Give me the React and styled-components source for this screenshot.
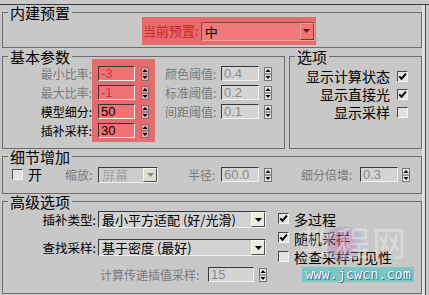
import React from 'react';
import styled, { createGlobalStyle } from 'styled-components';

const GlobalStyle = createGlobalStyle`
  html, body { margin: 0; padding: 0; background: #c8c8c8; }
  body { font-family: "Noto Sans CJK SC", "Noto Sans", sans-serif; }
`;

const Window = styled.div`
  position: relative;
  width: 429px;
  height: 295px;
  overflow: hidden;
  background: #c8c8c8;
  display: flex;
  flex-direction: column;
  color: #000;
`;

const TopStrip = styled.div`
  flex: none;
  height: 4px;
  border-bottom: 1px solid #3a3a3a;
`;

const Body = styled.div`
  display: flex;
  flex: 1;
  min-height: 0;
`;

const Content = styled.div`
  width: 420px;
  padding-left: 2px;
  display: flex;
  flex-direction: column;
`;

const Gutter = styled.div`
  flex: 1;
  background: linear-gradient(to right, #e2e2e2 0 3px, #4a4a4a 3px 4px, #c8c8c8 4px);
`;

const Group = styled.fieldset`
  box-sizing: border-box;
  margin: ${p => p.$mt || 0}px 0 0 ${p => p.$ml || 0}px;
  padding: 0;
  min-width: 0;
  height: ${p => p.$h}px;
  width: ${p => (p.$w ? `${p.$w}px` : 'auto')};
  border: 1px solid #6c6c6c;
  display: flex;
  flex-direction: ${p => p.$dir || 'column'};
  align-items: flex-start;
`;

const Legend = styled.legend`
  margin-left: 5px;
  padding: 0 2px;
  font-size: 15px;
  line-height: 15px;
`;

const GroupRow = styled.div`
  display: flex;
  margin-top: ${p => p.$mt || 0}px;
`;

const Label = styled.span`
  flex: none;
  box-sizing: border-box;
  width: ${p => (p.$w ? `${p.$w}px` : 'auto')};
  margin-left: ${p => p.$ml || 0}px;
  padding: 0 ${p => p.$pr || 0}px 0 ${p => p.$pl || 0}px;
  font-size: ${p => p.$fs || 12}px;
  line-height: ${p => p.$lh || 19}px;
  height: ${p => p.$lh || 19}px;
  text-align: ${p => p.$align || 'left'};
  color: ${p => (p.$dim ? '#7a7a7a' : p.$color || '#000')};
  white-space: nowrap;
`;

const Field = styled.div`
  flex: none;
  box-sizing: border-box;
  width: ${p => p.$w}px;
  height: 15px;
  margin-left: ${p => p.$ml || 0}px;
  border: 1px solid;
  border-color: #383838 #f0f0f0 #f0f0f0 #383838;
  background: ${p => p.$bg || '#d4d4d4'};
  color: ${p => p.$color || (p.$dim ? '#8a8a8a' : '#000')};
  font-family: "Liberation Sans", Arial, sans-serif;
  font-size: 13px;
  line-height: 13px;
  padding-left: 2px;
`;

const Control = styled.div`
  display: flex;
  align-items: center;
  height: ${p => p.$h || 19}px;
`;

const Spinner = styled.span`
  flex: none;
  display: flex;
  margin-left: ${p => p.$ml || 5}px;
`;

const SpinIcon = ({ bg = '#e4e4e4' }) => (
  <svg width="8" height="14" viewBox="0 0 8 14">
    <rect x="0.5" y="0.5" width="7" height="13" fill={bg} stroke="#777" />
    <line x1="1" y1="7" x2="7" y2="7" stroke="#555" />
    <path d="M4 2 L6.5 5 L1.5 5 Z" fill="#000" />
    <path d="M1.5 9 L6.5 9 L4 12 Z" fill="#000" />
  </svg>
);

const Spin = ({ ml, bg }) => (
  <Spinner $ml={ml}>
    <SpinIcon bg={bg} />
  </Spinner>
);

const Select = styled.div`
  flex: none;
  box-sizing: border-box;
  width: ${p => p.$w}px;
  height: ${p => p.$h || 17}px;
  margin-left: ${p => p.$ml || 0}px;
  display: flex;
  align-items: center;
  border: 1px solid;
  border-color: ${p => p.$edge || '#3a3a3a #f0f0f0 #f0f0f0 #3a3a3a'};
  background: ${p => p.$bg || '#d2d2d2'};
  color: ${p => (p.$dim ? '#a4a4a4' : '#000')};
  font-size: 13px;
  line-height: 15px;
  padding-left: 3px;
  white-space: nowrap;
`;

const SelectBtn = styled.span`
  margin-left: auto;
  box-sizing: border-box;
  width: 14px;
  height: 100%;
  display: flex;
  align-items: center;
  justify-content: center;
  border: 1px solid;
  border-color: ${p => p.$edge || '#f8f8f0 #505050 #505050 #f8f8f0'};
  background: ${p => p.$bg || '#ecebdc'};
`;

const Arrow = ({ color = '#000' }) => (
  <svg width="7" height="4" viewBox="0 0 7 4">
    <path d="M0 0 L7 0 L3.5 4 Z" fill={color} />
  </svg>
);

const Box = styled.span`
  flex: none;
  box-sizing: border-box;
  width: 11px;
  height: 11px;
  margin-left: ${p => p.$ml || 0}px;
  display: inline-flex;
  align-items: center;
  justify-content: center;
  border: 1px solid;
  border-color: #4a4a4a #f4f4f4 #f4f4f4 #4a4a4a;
  background: #e2e2e2;
`;

const CheckBox = ({ checked, ml }) => (
  <Box $ml={ml}>
    {checked && (
      <svg width="9" height="9" viewBox="0 0 9 9">
        <path d="M1.3 4.3 L3.5 6.8 L7.9 1.6" fill="none" stroke="#000" strokeWidth="1.9" />
      </svg>
    )}
  </Box>
);

/* 内建预置 */
const PresetHighlight = styled.div`
  display: flex;
  align-items: center;
  width: 174px;
  height: 28px;
  margin: -3px 0 0 139px;
  padding-left: 1px;
  box-sizing: border-box;
  background: #e46c6c;
`;

/* 基本参数 */
const LabelCol = styled.div`
  display: flex;
  flex-direction: column;
  width: ${p => p.$w}px;
  margin-left: ${p => p.$ml || 0}px;
`;

const ParamHighlight = styled.div`
  box-sizing: border-box;
  width: 63px;
  height: 83px;
  margin-top: -5px;
  padding: 5px 0 0 6px;
  background: #e46c6c;
  display: flex;
  flex-direction: column;
`;

const OptionList = styled.div`
  align-self: stretch;
  display: flex;
  flex-direction: column;
  align-items: flex-end;
  padding: 3px 13px 0 0;
`;

const OptionRow = styled.div`
  display: flex;
  align-items: center;
  gap: 7px;
  height: 18px;
  font-size: 14px;
`;

/* 高级选项 */
const AdvLeft = styled.div`
  display: flex;
  flex-direction: column;
`;

const CheckCol = styled.div`
  display: flex;
  flex-direction: column;
  margin-left: 11px;
`;

const CheckRow = styled.div`
  display: flex;
  align-items: center;
  gap: 5px;
  height: 19px;
  font-size: 14px;
`;

/* watermark over the corner */
const Watermark = styled.div`
  position: absolute;
  left: 296px;
  top: 222px;
  width: 124px;
  height: 62px;
  pointer-events: none;
`;

const Blob = styled.div`
  position: absolute;
  left: 26px;
  top: 4px;
  width: 44px;
  height: 36px;
  border-radius: 50%;
  background: radial-gradient(circle at 45% 45%, rgba(214, 90, 150, 0.55), rgba(150, 170, 220, 0.3) 60%, rgba(200, 200, 200, 0) 75%);
`;

const BigMark = styled.div`
  position: absolute;
  left: 4px;
  top: 2px;
  font-size: 34px;
  line-height: 36px;
  letter-spacing: 2px;
  color: rgba(255, 255, 255, 0.35);
  white-space: nowrap;
`;

const Url = styled.div`
  position: absolute;
  left: 6px;
  top: 45px;
  width: 112px;
  height: 15px;
  background: #7cc6c6;
  color: #fff;
  font-family: "DejaVu Sans Mono", monospace;
  font-size: 13.5px;
  line-height: 15px;
  text-align: center;
  text-shadow: 0 0 1px #2a5a8a, 1px 1px 0 #3a6a9a;
`;

const basicLeft = [
  { label: '最小比率:', value: '-3', dim: true },
  { label: '最大比率:', value: '-1', dim: true },
  { label: '模型细分:', value: '50' },
  { label: '插补采样:', value: '30' },
];

const thresholds = [
  { label: '颜色阈值:', value: '0.4' },
  { label: '标准阈值:', value: '0.2' },
  { label: '间距阈值:', value: '0.1' },
];

const options = [
  { label: '显示计算状态', checked: true },
  { label: '显示直接光', checked: true },
  { label: '显示采样', checked: false },
];

const advChecks = [
  { label: '多过程', checked: true },
  { label: '随机采样', checked: true },
  { label: '检查采样可见性', checked: false },
];

export default function App() {
  return (
    <>
      <GlobalStyle />
      <Window>
        <TopStrip />
        <Body>
          <Content>
            <Group $h={43}>
              <Legend>内建预置</Legend>
              <PresetHighlight>
                <Label $fs={13} $color="#d42424" $lh={28}>当前预置:</Label>
                <Select $w={114} $h={19} $ml={2} $bg="#f07a7a" $edge="#9a3a3a #f8a0a0 #f8a0a0 #9a3a3a">
                  中
                  <SelectBtn $bg="#ee7676" $edge="#f8a0a0 #8a3030 #8a3030 #f8a0a0">
                    <Arrow color="#7a1010" />
                  </SelectBtn>
                </Select>
              </PresetHighlight>
            </Group>

            <GroupRow $mt={1}>
              <Group $h={100} $w={283} $dir="row">
                <Legend>基本参数</Legend>
                <LabelCol $w={89}>
                  {basicLeft.map(r => (
                    <Label key={r.label} $align="right" $dim={r.dim}>{r.label}</Label>
                  ))}
                </LabelCol>
                <ParamHighlight>
                  {basicLeft.map(r => (
                    <Control key={r.label}>
                      <Field $w={37} $bg="#f07272" $color={r.dim ? '#a84848' : '#000'}>{r.value}</Field>
                      <Spin ml={6} bg="#f2a0a0" />
                    </Control>
                  ))}
                </ParamHighlight>
                <LabelCol $w={58} $ml={8}>
                  {thresholds.map(r => (
                    <Label key={r.label} $dim $pl={2}>{r.label}</Label>
                  ))}
                </LabelCol>
                <LabelCol $w={52}>
                  {thresholds.map(r => (
                    <Control key={r.label}>
                      <Field $w={38} $dim>{r.value}</Field>
                      <Spin ml={5} />
                    </Control>
                  ))}
                </LabelCol>
              </Group>

              <Group $h={100} $w={133} $ml={4}>
                <Legend>选项</Legend>
                <OptionList>
                  {options.map(o => (
                    <OptionRow key={o.label}>
                      {o.label}
                      <CheckBox checked={o.checked} />
                    </OptionRow>
                  ))}
                </OptionList>
              </Group>
            </GroupRow>

            <Group $h={45}>
              <Legend>细节增加</Legend>
              <GroupRow $mt={3}>
                <Control $h={15}>
                  <CheckBox ml={9} />
                  <Label $ml={5} $fs={14} $lh={15}>开</Label>
                  <Label $ml={23} $w={33} $dim $lh={15}>缩放:</Label>
                  <Select $w={60} $h={16} $bg="#cdcdcd" $dim>
                    屏幕
                    <SelectBtn $bg="#dcdcd2">
                      <Arrow color="#8a8a8a" />
                    </SelectBtn>
                  </Select>
                  <Label $ml={30} $w={33} $dim $lh={15}>半径:</Label>
                  <Field $w={38} $dim>60.0</Field>
                  <Spin ml={5} />
                  <Label $ml={29} $w={59} $dim $lh={15}>细分倍增:</Label>
                  <Field $w={38} $dim>0.3</Field>
                  <Spin ml={4} />
                </Control>
              </GroupRow>
            </Group>

            <Group $h={100} $dir="row">
              <Legend>高级选项</Legend>
              <AdvLeft>
                <GroupRow $mt={2}>
                  <Label $w={95} $align="right" $pr={2} $fs={12.5} $lh={17}>插补类型:</Label>
                  <Select $w={168}>
                    最小平方适配 (好/光滑)
                    <SelectBtn><Arrow /></SelectBtn>
                  </Select>
                </GroupRow>
                <GroupRow $mt={11}>
                  <Label $w={95} $align="right" $pr={2} $fs={12.5} $lh={17}>查找采样:</Label>
                  <Select $w={168}>
                    基于密度 (最好)
                    <SelectBtn><Arrow /></SelectBtn>
                  </Select>
                </GroupRow>
                <GroupRow $mt={10}>
                  <Control $h={17}>
                    <Label $ml={97} $w={108} $dim $lh={17}>计算传递插值采样:</Label>
                    <Field $w={46} $dim>15</Field>
                    <Spin ml={5} />
                  </Control>
                </GroupRow>
              </AdvLeft>
              <CheckCol>
                {advChecks.map(c => (
                  <CheckRow key={c.label}>
                    <CheckBox checked={c.checked} />
                    {c.label}
                  </CheckRow>
                ))}
              </CheckCol>
            </Group>
          </Content>
          <Gutter />
        </Body>

        <Watermark>
          <Blob />
          <BigMark>教程网</BigMark>
          <Url>www.jcwcn.com</Url>
        </Watermark>
      </Window>
    </>
  );
}
